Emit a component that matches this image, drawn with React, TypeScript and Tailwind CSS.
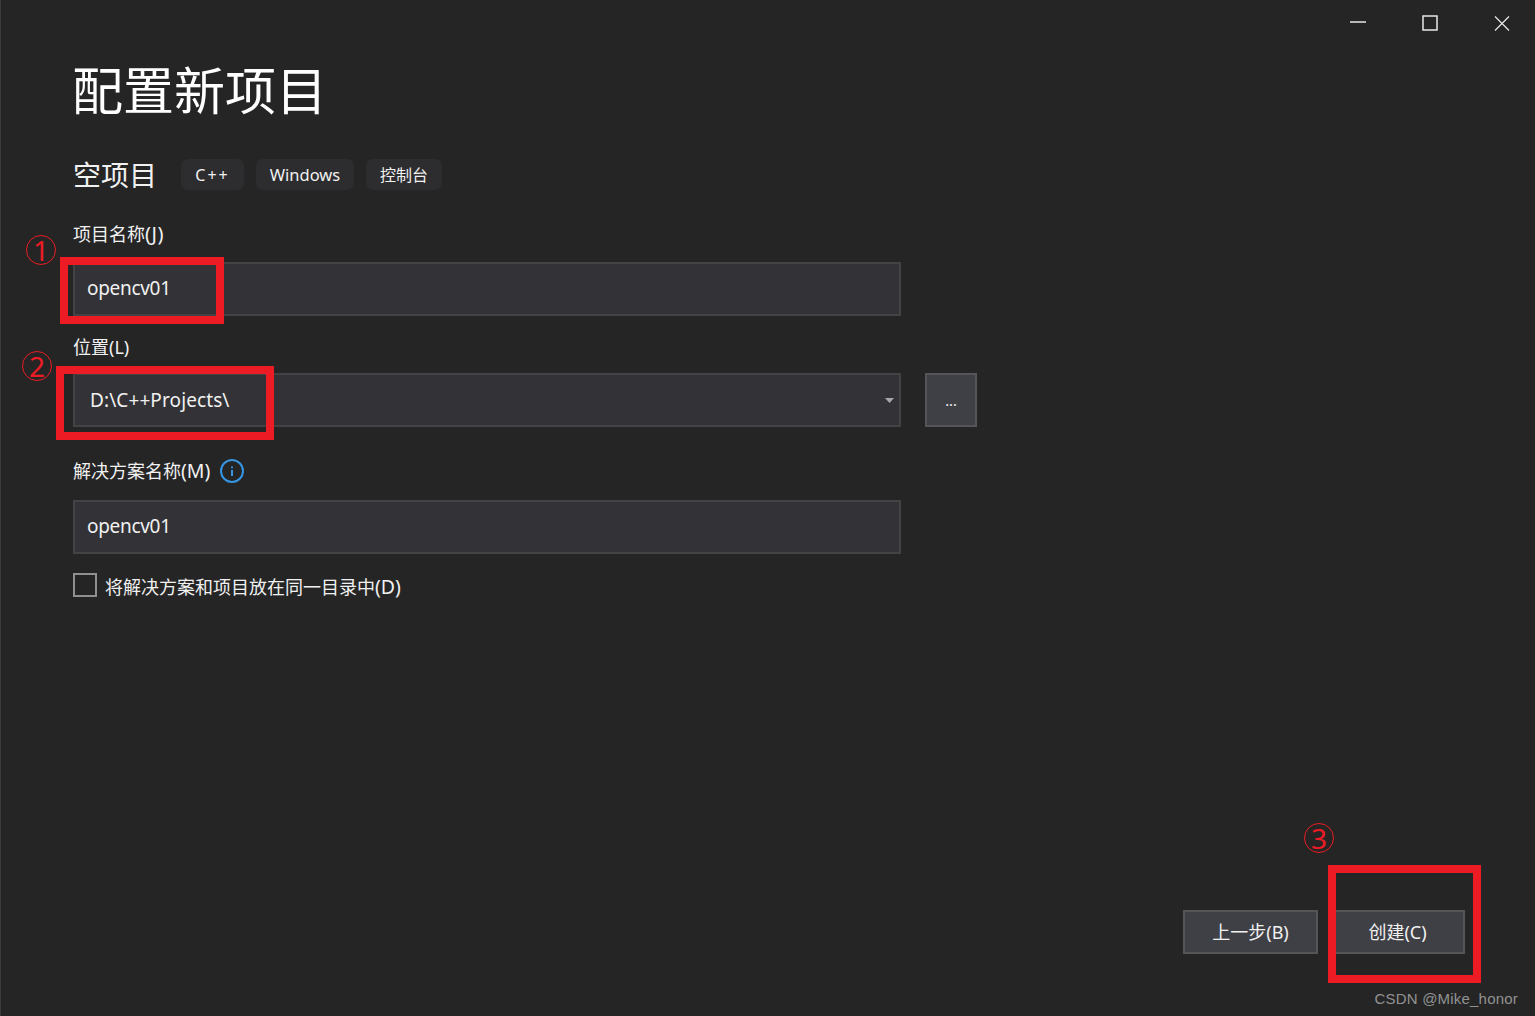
const font = 'font-["Noto_Sans","Noto_Sans_CJK_SC",sans-serif]';

function Chip({ label, className }: { label: string; className: string }) {
  return (
    <div className={`flex h-[31px] items-center justify-center rounded-[7px] bg-[#2d2d30] pt-[1px] text-[#f1f1f1] ${className}`}>
      {label}
    </div>
  );
}

function Marker({ className }: { className: string }) {
  return <div className={`pointer-events-none absolute border-[8px] border-[#ed1c24] ${className}`} />;
}

function Circled({ label, className }: { label: string; className: string }) {
  return (
    <div className={`pointer-events-none absolute flex h-[30px] w-[30px] items-center justify-center rounded-full border border-[#ed1c24] text-[28px] leading-none font-normal text-[#ed1c24] ${className}`}>
      {label}
    </div>
  );
}

export default function App() {
  return (
    <div className={`relative flex h-[1016px] w-full flex-col overflow-hidden border-l border-[#3a3a3f] bg-[#252526] text-[#f1f1f1] ${font}`}>
      {/* Window buttons */}
      <div className="flex h-[44px] items-start justify-end">
        <svg width="16" height="44" viewBox="0 0 16 44" className="mr-[56px]">
          <path d="M0 22h16" stroke="#e8e8e8" strokeWidth="1.5" />
        </svg>
        <svg width="16" height="44" viewBox="0 0 16 44" className="mr-[56px]">
          <rect x="1" y="16" width="14" height="14" fill="none" stroke="#e8e8e8" strokeWidth="1.5" />
        </svg>
        <svg width="16" height="44" viewBox="0 0 16 44" className="mr-[25px]">
          <path d="M1 16.500 15 30.500M15 16.500 1 30.500" stroke="#e8e8e8" strokeWidth="1.200" />
        </svg>
      </div>

      <div className="flex flex-col pl-[72px]">
        <h1 className="mt-[16px] -ml-[1px] h-[60px] text-[51px] leading-[60px] font-normal text-white">配置新项目</h1>

        <div className="mt-[39px] flex h-[31px] items-center">
          <span className="w-[108px] pt-[2px] text-[28px] leading-[31px]">空项目</span>
          <Chip label="C++" className="w-[63px] text-[16px] tracking-[2px]" />
          <Chip label="Windows" className="ml-[12px] w-[98px] text-[16.500px]" />
          <Chip label="控制台" className="ml-[12px] w-[76px] text-[16px]" />
        </div>

        <label className="mt-[33px] h-[23px] text-[18px] leading-[22px]">
          项目名称<span className="text-[20px] tracking-[0.500px]">(J)</span>
        </label>
        <div className="mt-[16px] flex h-[54px] w-[828px] items-center border-2 border-[#434346] bg-[#333337] pb-[1px] pl-[12px] text-[19px] tracking-[-0.300px]">
          opencv01
        </div>

        <label className="mt-[20px] h-[23px] text-[18px] leading-[22px]">位置(L)</label>
        <div className="mt-[14px] flex items-start">
          <div className="flex h-[54px] w-[828px] items-center justify-between border-2 border-[#434346] bg-[#333337] pr-[5px] pl-[15px] text-[19px] tracking-[0.100px]">
            <span>D:\C++Projects\</span>
            <svg width="9" height="5" viewBox="0 0 9 5">
              <path d="M0 0h9L4.500 5z" fill="#a8a8a8" />
            </svg>
          </div>
          <button className="ml-[24px] flex h-[54px] w-[52px] items-center justify-center border-2 border-[#555558] bg-[#3f3f46] pt-[2px] text-[14.500px]">
            ...
          </button>
        </div>

        <div className="mt-[32px] flex h-[24px] items-center">
          <label className="text-[18px] leading-[22px]">
            解决方案名称<span className="text-[19.500px]">(M)</span>
          </label>
          <svg width="24" height="24" viewBox="0 0 24 24" className="ml-[10px]">
            <circle cx="12" cy="12" r="11" fill="none" stroke="#3794e0" strokeWidth="2" />
            <path d="M12 7.500v1.800M12 11v6" stroke="#3794e0" strokeWidth="2" />
          </svg>
        </div>
        <div className="mt-[17px] flex h-[54px] w-[828px] items-center border-2 border-[#434346] bg-[#333337] pb-[1px] pl-[12px] text-[19px] tracking-[-0.300px]">
          opencv01
        </div>

        <div className="mt-[19px] flex h-[24px] items-center">
          <div className="h-[24px] w-[24px] border-2 border-[#8f8f8f]" />
          <span className="ml-[8px] pt-[4px] text-[18px] leading-[22px]">
            将解决方案和项目放在同一目录中<span className="text-[19.500px]">(D)</span>
          </span>
        </div>
      </div>

      <div className="mt-auto mr-[70px] mb-[62px] flex justify-end gap-[12px]">
        <button className="flex h-[44px] w-[135px] items-center justify-center border-2 border-[#555558] bg-[#3f3f46] text-[18px]">
          上一步(B)
        </button>
        <button className="flex h-[44px] w-[135px] items-center justify-center border-2 border-[#555558] bg-[#3f3f46] text-[18px]">
          创建(C)
        </button>
      </div>

      {/* Annotations drawn on top of the screenshot */}
      <Marker className="top-[257px] left-[59px] h-[67px] w-[164px]" />
      <Marker className="top-[366px] left-[55px] h-[74px] w-[218px]" />
      <Marker className="top-[865px] left-[1327px] h-[118px] w-[153px]" />
      <Circled label="1" className="top-[235px] left-[25px]" />
      <Circled label="2" className="top-[351px] left-[21px]" />
      <Circled label="3" className="top-[823px] left-[1303px]" />

      <div className='absolute top-[989px] right-[17px] font-["Liberation_Sans",sans-serif] text-[15px] leading-[20px] tracking-[0.200px] text-[#929292]'>
        CSDN @Mike_honor
      </div>
    </div>
  );
}
